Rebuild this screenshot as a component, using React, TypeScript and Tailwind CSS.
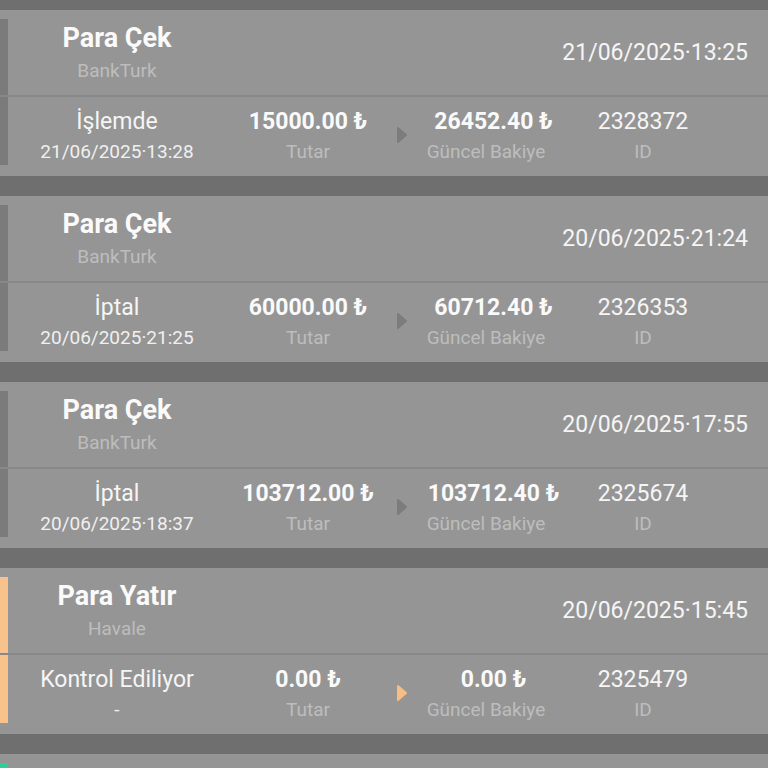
import React from "react";

type Tx = {
  title: string;
  method: string;
  date: string;
  status: string;
  statusDate: string;
  amount: string;
  balance: string;
  id: string;
  kind: "out" | "in" | "ok";
};

const data: Tx[] = [
  { title: "Para Çek", method: "BankTurk", date: "21/06/2025·13:25", status: "İşlemde", statusDate: "21/06/2025·13:28", amount: "15000.00 ₺", balance: "26452.40 ₺", id: "2328372", kind: "out" },
  { title: "Para Çek", method: "BankTurk", date: "20/06/2025·21:24", status: "İptal", statusDate: "20/06/2025·21:25", amount: "60000.00 ₺", balance: "60712.40 ₺", id: "2326353", kind: "out" },
  { title: "Para Çek", method: "BankTurk", date: "20/06/2025·17:55", status: "İptal", statusDate: "20/06/2025·18:37", amount: "103712.00 ₺", balance: "103712.40 ₺", id: "2325674", kind: "out" },
  { title: "Para Yatır", method: "Havale", date: "20/06/2025·15:45", status: "Kontrol Ediliyor", statusDate: "-", amount: "0.00 ₺", balance: "0.00 ₺", id: "2325479", kind: "in" },
  { title: "Para Yatır", method: "Havale", date: "20/06/2025·14:10", status: "Onaylandı", statusDate: "20/06/2025·14:12", amount: "60000.00 ₺", balance: "60712.40 ₺", id: "2325311", kind: "ok" },
];

function stripeClass(kind: Tx["kind"]) {
  if (kind === "in") return "bg-[#f7c28b]";
  if (kind === "ok") return "bg-[#2dd09b]";
  return "bg-[#7b7b7b]";
}

function arrowColor(kind: Tx["kind"]) {
  if (kind === "in") return "#f7be82";
  if (kind === "ok") return "#2dd09b";
  return "#7c7c7c";
}

function Card({ t }: { t: Tx }) {
  const c = arrowColor(t.kind);
  return (
    <div className="bg-[#959595] h-[166px] flex flex-col shrink-0">
      <div className="h-[85px] flex flex-row">
        <div className={`w-[8px] mt-[9px] ${stripeClass(t.kind)}`} />
        <div className="w-[218px] flex flex-col items-center pt-[13px]">
          <div className="text-[27px] leading-[30px] font-bold text-[#fafafa] whitespace-nowrap">{t.title}</div>
          <div className="text-[19px] leading-[22px] text-[#bdbdbd] mt-[7px]">{t.method}</div>
        </div>
        <div className="flex-1 flex items-center justify-end pr-[20px] pt-[1px]">
          <div className="text-[23px] leading-[26px] text-[#f5f5f5] whitespace-nowrap">{t.date}</div>
        </div>
      </div>
      <div className="h-[2px] bg-[#888888]" />
      <div className="flex-1 flex flex-row">
        <div className={`w-[8px] mb-[11px] ${stripeClass(t.kind)}`} />
        <div className="w-[218px] flex flex-col items-center pt-[12px] gap-[5px]">
          <div className="text-[23px] leading-[26px] text-[#f5f5f5] whitespace-nowrap">{t.status}</div>
          <div className="text-[19px] leading-[24px] text-[#f0f0f0] whitespace-nowrap">{t.statusDate}</div>
        </div>
        <div className="w-[164px] flex flex-col items-center pt-[12px] gap-[5px]">
          <div className="text-[23px] leading-[26px] font-bold text-[#fafafa] whitespace-nowrap">{t.amount}</div>
          <div className="text-[19px] leading-[24px] text-[#bdbdbd]">Tutar</div>
        </div>
        <div className="w-[24px] flex items-center justify-center pb-[3px]">
          <svg width="12" height="18" viewBox="0 0 12 18">
            <path d="M2 2 L10 9 L2 16 Z" fill={c} stroke={c} strokeWidth="2" strokeLinejoin="round" />
          </svg>
        </div>
        <div className="w-[144px] flex flex-col items-center pt-[12px] gap-[5px]">
          <div className="text-[23px] leading-[26px] font-bold text-[#fafafa] whitespace-nowrap pl-[15px]">{t.balance}</div>
          <div className="text-[19px] leading-[24px] text-[#bdbdbd] whitespace-nowrap">Güncel Bakiye</div>
        </div>
        <div className="w-[170px] flex flex-col items-center pt-[12px] gap-[5px]">
          <div className="text-[23px] leading-[26px] text-[#f5f5f5]">{t.id}</div>
          <div className="text-[19px] leading-[24px] text-[#bdbdbd]">ID</div>
        </div>
      </div>
    </div>
  );
}

export default function App() {
  return (
    <div
      className="w-[768px] min-h-[768px] bg-[#6f6f6f] flex flex-col gap-[20px] pt-[10px] pb-[20px]"
      style={{ fontFamily: "Roboto, 'Noto Sans', 'Liberation Sans', sans-serif" }}
    >
      {data.map((t, i) => (
        <Card key={i} t={t} />
      ))}
    </div>
  );
}
